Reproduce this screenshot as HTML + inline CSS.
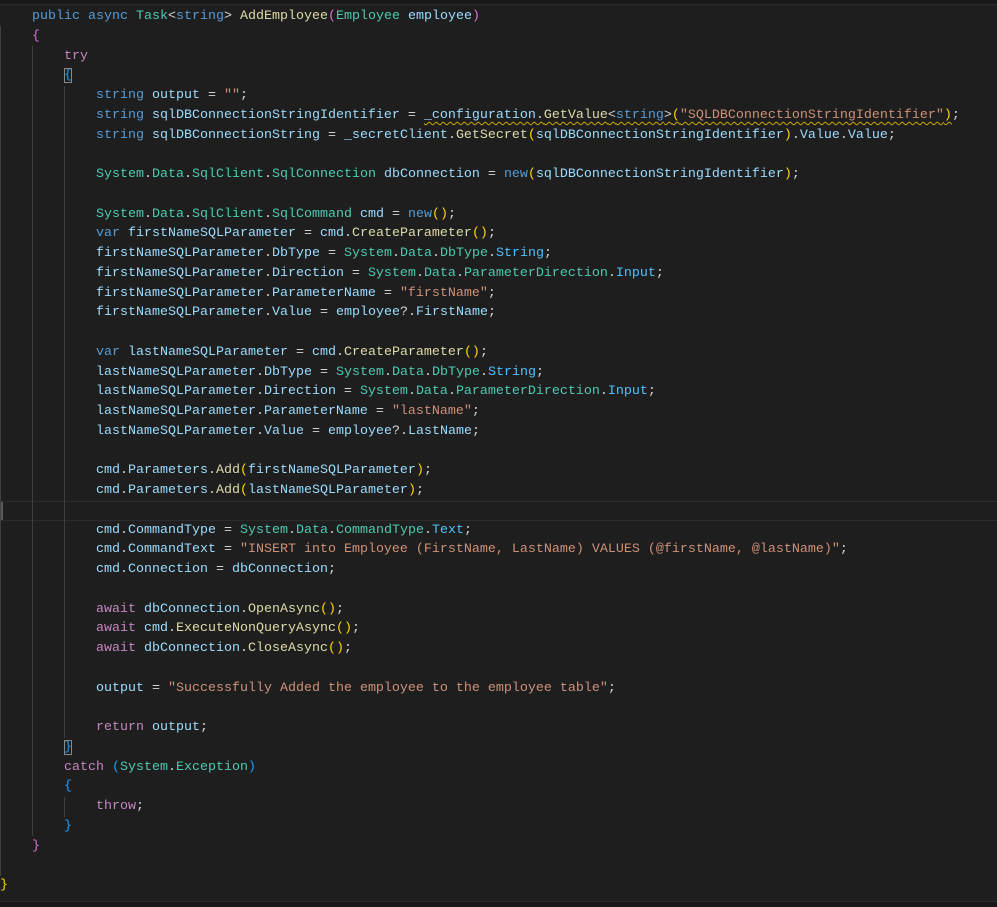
<!DOCTYPE html>
<html><head><meta charset="utf-8"><style>
html,body{margin:0;padding:0;background:#1e1e1e;width:997px;height:906px;overflow:hidden}
#top{position:absolute;left:0;top:0;width:997px;height:4px;background:#181818;border-bottom:1px solid #2b2b2b}
#bot{position:absolute;left:0;top:901px;width:997px;height:5px;background:#181818;border-top:1px solid #2b2b2b}
#cur{position:absolute;left:0;top:501px;width:997px;height:18px;border-top:1px solid #2c2c2c;border-bottom:1px solid #2c2c2c}
#cur:before{content:"";position:absolute;left:0;top:0;width:3px;height:18px;background:#5a5a5a}
.g{position:absolute;width:1px;background:#404040}
pre{position:absolute;left:0;top:7px;margin:0;font-family:"Liberation Mono",monospace;font-size:13.33px;line-height:19.75px;color:#d4d4d4;white-space:pre}
.k{color:#569cd6}.c{color:#c586c0}.t{color:#4ec9b0}.m{color:#dcdcaa}.v{color:#9cdcfe}.s{color:#ce9178}.e{color:#4fc1ff}
.b1{color:#ffd700}.b2{color:#da70d6}.b3{color:#179fff}
.bx{outline:1px solid #888;outline-offset:-1px}
.sq{text-decoration:underline wavy #cca700;text-decoration-thickness:1px;text-underline-offset:3px}
</style></head><body>
<div id="top"></div>
<div id="cur"></div>
<div class="g" style="left:0;top:26px;height:850px"></div>
<div class="g" style="left:32px;top:46px;height:790px"></div>
<div class="g" style="left:64px;top:86px;height:652px"></div>
<div class="g" style="left:64px;top:797px;height:20px"></div>
<div id="bot"></div>
<pre>    <span class="k">public</span> <span class="k">async</span> <span class="t">Task</span>&lt;<span class="k">string</span>&gt; <span class="m">AddEmployee</span><span class="b2">(</span><span class="t">Employee</span> <span class="v">employee</span><span class="b2">)</span>
    <span class="b2">{</span>
        <span class="c">try</span>
        <span class="b3 bx">{</span>
            <span class="k">string</span> <span class="v">output</span> = <span class="s">""</span>;
            <span class="k">string</span> <span class="v">sqlDBConnectionStringIdentifier</span> = <span class="sq"><span class="v">_configuration</span>.<span class="m">GetValue</span>&lt;<span class="k">string</span>&gt;<span class="b1">(</span><span class="s">"SQLDBConnectionStringIdentifier"</span><span class="b1">)</span></span>;
            <span class="k">string</span> <span class="v">sqlDBConnectionString</span> = <span class="v">_secretClient</span>.<span class="m">GetSecret</span><span class="b1">(</span><span class="v">sqlDBConnectionStringIdentifier</span><span class="b1">)</span>.<span class="v">Value</span>.<span class="v">Value</span>;

            <span class="t">System</span>.<span class="t">Data</span>.<span class="t">SqlClient</span>.<span class="t">SqlConnection</span> <span class="v">dbConnection</span> = <span class="k">new</span><span class="b1">(</span><span class="v">sqlDBConnectionStringIdentifier</span><span class="b1">)</span>;

            <span class="t">System</span>.<span class="t">Data</span>.<span class="t">SqlClient</span>.<span class="t">SqlCommand</span> <span class="v">cmd</span> = <span class="k">new</span><span class="b1">()</span>;
            <span class="k">var</span> <span class="v">firstNameSQLParameter</span> = <span class="v">cmd</span>.<span class="m">CreateParameter</span><span class="b1">()</span>;
            <span class="v">firstNameSQLParameter</span>.<span class="v">DbType</span> = <span class="t">System</span>.<span class="t">Data</span>.<span class="t">DbType</span>.<span class="e">String</span>;
            <span class="v">firstNameSQLParameter</span>.<span class="v">Direction</span> = <span class="t">System</span>.<span class="t">Data</span>.<span class="t">ParameterDirection</span>.<span class="e">Input</span>;
            <span class="v">firstNameSQLParameter</span>.<span class="v">ParameterName</span> = <span class="s">"firstName"</span>;
            <span class="v">firstNameSQLParameter</span>.<span class="v">Value</span> = <span class="v">employee</span>?.<span class="v">FirstName</span>;

            <span class="k">var</span> <span class="v">lastNameSQLParameter</span> = <span class="v">cmd</span>.<span class="m">CreateParameter</span><span class="b1">()</span>;
            <span class="v">lastNameSQLParameter</span>.<span class="v">DbType</span> = <span class="t">System</span>.<span class="t">Data</span>.<span class="t">DbType</span>.<span class="e">String</span>;
            <span class="v">lastNameSQLParameter</span>.<span class="v">Direction</span> = <span class="t">System</span>.<span class="t">Data</span>.<span class="t">ParameterDirection</span>.<span class="e">Input</span>;
            <span class="v">lastNameSQLParameter</span>.<span class="v">ParameterName</span> = <span class="s">"lastName"</span>;
            <span class="v">lastNameSQLParameter</span>.<span class="v">Value</span> = <span class="v">employee</span>?.<span class="v">LastName</span>;

            <span class="v">cmd</span>.<span class="v">Parameters</span>.<span class="m">Add</span><span class="b1">(</span><span class="v">firstNameSQLParameter</span><span class="b1">)</span>;
            <span class="v">cmd</span>.<span class="v">Parameters</span>.<span class="m">Add</span><span class="b1">(</span><span class="v">lastNameSQLParameter</span><span class="b1">)</span>;

            <span class="v">cmd</span>.<span class="v">CommandType</span> = <span class="t">System</span>.<span class="t">Data</span>.<span class="t">CommandType</span>.<span class="e">Text</span>;
            <span class="v">cmd</span>.<span class="v">CommandText</span> = <span class="s">"INSERT into Employee (FirstName, LastName) VALUES (@firstName, @lastName)"</span>;
            <span class="v">cmd</span>.<span class="v">Connection</span> = <span class="v">dbConnection</span>;

            <span class="c">await</span> <span class="v">dbConnection</span>.<span class="m">OpenAsync</span><span class="b1">()</span>;
            <span class="c">await</span> <span class="v">cmd</span>.<span class="m">ExecuteNonQueryAsync</span><span class="b1">()</span>;
            <span class="c">await</span> <span class="v">dbConnection</span>.<span class="m">CloseAsync</span><span class="b1">()</span>;

            <span class="v">output</span> = <span class="s">"Successfully Added the employee to the employee table"</span>;

            <span class="c">return</span> <span class="v">output</span>;
        <span class="b3 bx">}</span>
        <span class="c">catch</span> <span class="b3">(</span><span class="t">System</span>.<span class="t">Exception</span><span class="b3">)</span>
        <span class="b3">{</span>
            <span class="c">throw</span>;
        <span class="b3">}</span>
    <span class="b2">}</span>

<span class="b1">}</span></pre>
</body></html>
